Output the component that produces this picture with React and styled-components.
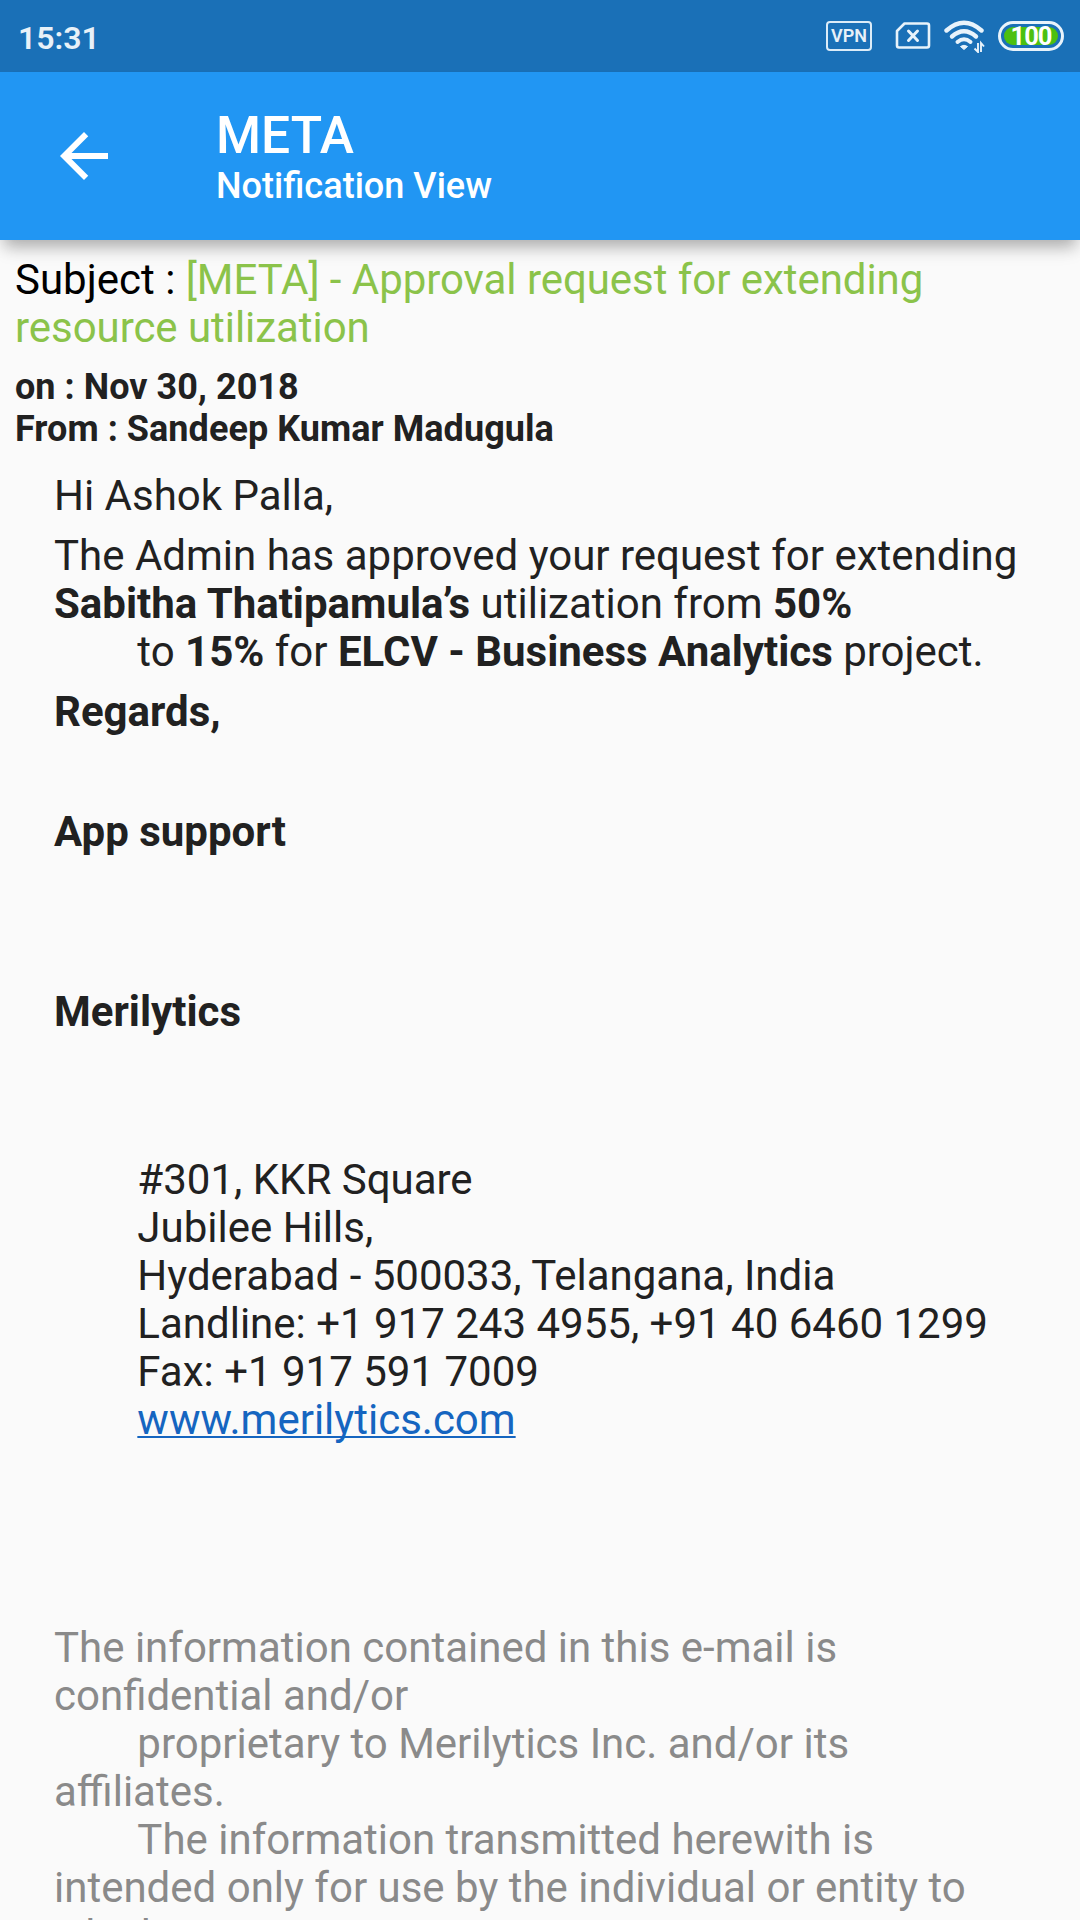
import React, { Component } from 'react';
import styled, { createGlobalStyle } from 'styled-components';

const GlobalStyle = createGlobalStyle`
    html, body {
        margin: 0;
        padding: 0;
        overflow: hidden;
    }
    * {
        box-sizing: border-box;
    }
`;

const Screen = styled.div`
    display: flex;
    flex-direction: column;
    width: 1080px;
    height: 1920px;
    overflow: hidden;
    background: #fafafa;
    color: #212121;
    font-family: Roboto, "Liberation Sans", sans-serif;
`;

const StatusBar = styled.div`
    display: flex;
    align-items: center;
    justify-content: space-between;
    flex: none;
    height: 72px;
    padding: 0 16px 0 18px;
    background: #1a70b7;
    color: #e8f1f8;
`;

const Clock = styled.span`
    font-size: 32px;
    font-weight: 600;
    line-height: 36px;
    padding-top: 3px;
`;

const StatusIcons = styled.div`
    display: flex;
    align-items: center;
    height: 30px;
`;

const VpnBadge = styled.span`
    width: 46px;
    height: 30px;
    margin-right: 23px;
    border: 2px solid #dcecf8;
    border-radius: 4px;
    font-size: 18px;
    font-weight: 600;
    line-height: 26px;
    text-align: center;
`;

const Battery = styled.span`
    width: 66px;
    height: 30px;
    padding: 3px;
    border: 3px solid #e8f3fb;
    border-radius: 15px;
`;

const BatteryLevel = styled.span`
    display: block;
    height: 18px;
    border-radius: 9px;
    background: #4cc010;
    color: #fff;
    font-size: 25.5px;
    font-weight: 700;
    line-height: 19px;
    letter-spacing: -1px;
    text-align: center;
`;

const SimIcon = styled.svg`
    width: 36px;
    height: 30px;
    margin-right: 13px;
`;

const WifiIcon = styled.svg`
    width: 42px;
    height: 34px;
    margin-right: 12px;
`;

const Toolbar = styled.header`
    display: flex;
    align-items: center;
    flex: none;
    height: 168px;
    padding-left: 48px;
    background: #2196f3;
    color: #fff;
    box-shadow: 0 10px 14px -4px rgba(0, 0, 0, 0.2), 0 12px 18px -4px rgba(0, 0, 0, 0.14);
`;

const BackButton = styled.button`
    width: 72px;
    height: 72px;
    margin: 0 96px 0 0;
    padding: 0;
    border: 0;
    background: none;
    color: inherit;
    svg {
        display: block;
        width: 72px;
        height: 72px;
    }
`;

const Title = styled.h1`
    margin: 0;
    padding-top: 2px;
    font-size: 51.5px;
    font-weight: 500;
    line-height: 58px;
`;

const Subtitle = styled.h2`
    margin: 0;
    font-size: 36.1px;
    font-weight: 500;
    line-height: 42px;
`;

const Message = styled.main`
    padding: 16px 15px 0;
`;

const Subject = styled.div`
    color: #000;
    font-size: 42px;
    line-height: 48px;
    span {
        color: #8bc34a;
        letter-spacing: -0.05px;
    }
`;

const Meta = styled.div`
    margin-top: 14px;
    font-size: 36px;
    font-weight: 700;
    line-height: 42px;
    letter-spacing: 0.05px;
`;

const Body = styled.article`
    padding: 22px 39px 0;
    font-size: 42px;
    line-height: 48px;
`;

const Paragraph = styled.p`
    margin: ${props => props.$gap || 0}px 0 0;
    color: ${props => (props.$muted ? '#8a8a8a' : 'inherit')};
    white-space: pre-wrap;
    b {
        font-weight: 700;
    }
`;

const SiteLink = styled.a`
    color: #1565c0;
    text-decoration: underline;
    text-decoration-thickness: 2px;
    text-underline-offset: 2px;
    text-decoration-skip-ink: none;
`;

const TAB = '        ';

const address = [
    '#301, KKR Square',
    'Jubilee Hills,',
    'Hyderabad - 500033, Telangana, India',
    'Landline: +1 917 243 4955, +91 40 6460 1299',
    'Fax: +1 917 591 7009'
];

const disclaimer = [
    'The information contained in this e-mail is confidential and/or',
    TAB + 'proprietary to Merilytics Inc. and/or its affiliates.',
    TAB + 'The information transmitted herewith is intended only for use by the individual or entity to which'
].join('\n');

class App extends Component {

    renderStatusBar() {
        return (
            <StatusBar>
                <Clock>15:31</Clock>
                <StatusIcons>
                    <VpnBadge>VPN</VpnBadge>
                    <SimIcon viewBox="0 0 36 30" fill="none" stroke="#e8f3fb" strokeLinejoin="round">
                        <path d="M9.500 2.500H32Q34 2.500 34 4.500V24.500Q34 26.500 32 26.500H4Q2 26.500 2 24.500V10Z" strokeWidth="2.6" />
                        <path d="M13.500 10L22.500 19.500M22.500 10L13.500 19.500" strokeWidth="3" strokeLinecap="round" />
                    </SimIcon>
                    <WifiIcon viewBox="0 0 42 34" fill="none" stroke="#e8f3fb">
                        <path d="M2.500 11.500Q20 -4 37.500 11.500" strokeWidth="4.400" strokeLinecap="round" />
                        <path d="M8 17.500Q20 7 32 17.500" strokeWidth="4.400" strokeLinecap="round" />
                        <path d="M13.500 23Q20 17.500 26.500 23" strokeWidth="4" strokeLinecap="round" />
                        <path d="M16.500 27.500Q20 25 23.500 27.500L20 30.500Z" fill="#e8f3fb" strokeWidth="1" />
                        <path d="M34 24V33L30.500 29.500M37 33V24L40 27.500" strokeWidth="1.900" />
                    </WifiIcon>
                    <Battery>
                        <BatteryLevel>100</BatteryLevel>
                    </Battery>
                </StatusIcons>
            </StatusBar>
        )
    }

    render() {
        return (
            <Screen>
                <GlobalStyle />
                {this.renderStatusBar()}
                <Toolbar>
                    <BackButton aria-label="Back">
                        <svg viewBox="0 0 24 24" fill="currentColor">
                            <path d="M20 11H7.83l5.59-5.59L12 4l-8 8 8 8 1.41-1.41L7.83 13H20v-2z" />
                        </svg>
                    </BackButton>
                    <div>
                        <Title>META</Title>
                        <Subtitle>Notification View</Subtitle>
                    </div>
                </Toolbar>
                <Message>
                    <Subject>
                        Subject : <span>[META] - Approval request for extending resource utilization</span>
                    </Subject>
                    <Meta>
                        <div>on : Nov 30, 2018</div>
                        <div>From : Sandeep Kumar Madugula</div>
                    </Meta>
                    <Body>
                        <Paragraph>Hi Ashok Palla,</Paragraph>
                        <Paragraph $gap={12}>
                            The Admin has approved your request for extending <b>Sabitha Thatipamula’s</b> utilization from <b>50%</b>
                            {'\n' + TAB}to <b>15%</b> for <b>ELCV - Business Analytics</b> project.
                        </Paragraph>
                        <Paragraph $gap={12}><b>Regards,</b></Paragraph>
                        <Paragraph $gap={72}><b>App support</b></Paragraph>
                        <Paragraph $gap={132}><b>Merilytics</b></Paragraph>
                        <Paragraph $gap={120}>
                            {address.map(line => TAB + line + '\n')}
                            {TAB}<SiteLink href="#">www.merilytics.com</SiteLink>
                        </Paragraph>
                        <Paragraph $gap={180} $muted>{disclaimer}</Paragraph>
                    </Body>
                </Message>
            </Screen>
        )
    }
}

export default App;
